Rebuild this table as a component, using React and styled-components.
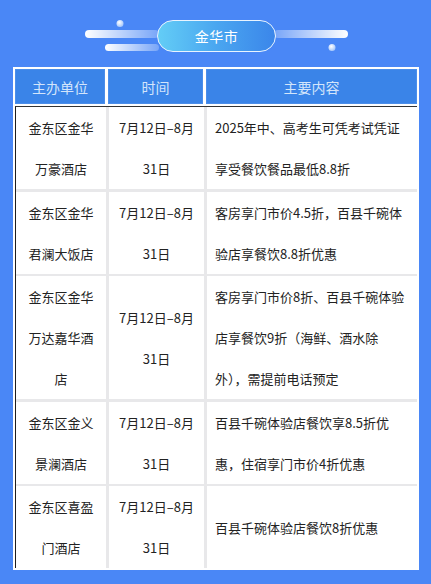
import React from "react";
import styled, { createGlobalStyle } from "styled-components";

const Global = createGlobalStyle`
  html, body {
    margin: 0;
    padding: 0;
    background: #4a87f6;
  }
  body {
    font-family: "Noto Sans CJK SC", "Noto Sans", sans-serif;
  }
`;

const Page = styled.div`
  width: 431px;
  min-height: 584px;
  background: #4a87f6;
  padding-top: 19px;
  box-sizing: border-box;
`;

////////////////////////////////////////////////////////////////////////
const TitleRow = styled.div`
  display: flex;
  justify-content: center;
  align-items: flex-start;
  height: 34px;
  padding-left: 2px;
`;

const Pill = styled.div`
  position: relative;
  z-index: 1;
  width: 119px;
  height: 32px;
  margin: 1px -2px 0;
  box-sizing: border-box;
  border: 1px solid #e9f4ff;
  border-radius: 16px;
  background: linear-gradient(90deg, #63cdf6 0%, #4aa6f0 50%, #3b86ea 100%);
  color: #fff;
  font-size: 14px;
  display: flex;
  align-items: center;
  justify-content: center;
  letter-spacing: 0.5px;
`;

const Deco = styled.svg`
  display: block;
  flex: none;
`;

////////////////////////////////////////////////////////////////////////
const Table = styled.div`
  margin: 14px 12px 0 13px;
  background: #fff;
  padding: 2px;
  color: #222;
`;

const Columns = styled.div`
  display: grid;
  grid-template-columns: 90px 95px 1fr;
  column-gap: ${(p) => p.$gap}px;
`;

const HeadCell = styled.div`
  height: 35px;
  background: #3a84e8;
  color: #d3e5fb;
  font-size: 14px;
  display: flex;
  align-items: center;
  justify-content: center;
  box-sizing: border-box;
  border: 1px solid #4b8eea;
`;

const Body = styled.div`
  margin-top: 2px;
  border-left: 1.5px solid #1d1d1d;
  border-top: 1px solid #333;
  background: #e8e8ea;
  display: grid;
  row-gap: 2.5px;
`;

const Cell = styled.div`
  background: #fff;
  font-size: 13px;
  line-height: 41px;
  display: flex;
  align-items: center;
  justify-content: ${(p) => (p.$left ? "flex-start" : "center")};
  text-align: ${(p) => (p.$left ? "left" : "center")};
  padding: 0 ${(p) => (p.$left ? "8px" : "7px")};
  box-sizing: border-box;
`;

const rows = [
  {
    org: "金东区金华万豪酒店",
    time: "7月12日–8月31日",
    text: "2025年中、高考生可凭考试凭证享受餐饮餐品最低8.8折",
  },
  {
    org: "金东区金华君澜大饭店",
    time: "7月12日–8月31日",
    text: "客房享门市价4.5折，百县千碗体验店享餐饮8.8折优惠",
  },
  {
    org: "金东区金华万达嘉华酒店",
    time: "7月12日–8月31日",
    text: "客房享门市价8折、百县千碗体验店享餐饮9折（海鲜、酒水除外），需提前电话预定",
  },
  {
    org: "金东区金义景澜酒店",
    time: "7月12日–8月31日",
    text: "百县千碗体验店餐饮享8.5折优惠，住宿享门市价4折优惠",
  },
  {
    org: "金东区喜盈门酒店",
    time: "7月12日–8月31日",
    text: "百县千碗体验店餐饮8折优惠",
  },
];

function LeftDeco() {
  return (
    <Deco width="74" height="34" viewBox="0 0 74 34">
      <defs>
        <linearGradient id="barL" x1="0" x2="1" y1="0" y2="0">
          <stop offset="0" stopColor="#ffffff" />
          <stop offset="1" stopColor="#ffffff" stopOpacity="0.25" />
        </linearGradient>
        <radialGradient id="dotL" cx="0.4" cy="0.35" r="0.7">
          <stop offset="0" stopColor="#ffffff" />
          <stop offset="1" stopColor="#9fc3fb" />
        </radialGradient>
      </defs>
      <rect x="0" y="11" width="74" height="8" rx="4" fill="url(#barL)" />
      <rect x="20" y="25" width="54" height="7" rx="3.5" fill="url(#barL)" />
      <circle cx="35" cy="4.5" r="3.5" fill="url(#dotL)" />
    </Deco>
  );
}

function RightDeco() {
  return (
    <Deco width="74" height="34" viewBox="0 0 74 34">
      <defs>
        <linearGradient id="barR" x1="0" x2="1" y1="0" y2="0">
          <stop offset="0" stopColor="#ffffff" stopOpacity="0.25" />
          <stop offset="1" stopColor="#ffffff" />
        </linearGradient>
        <radialGradient id="dotR" cx="0.4" cy="0.35" r="0.7">
          <stop offset="0" stopColor="#ffffff" />
          <stop offset="1" stopColor="#9fc3fb" />
        </radialGradient>
      </defs>
      <rect x="0" y="11" width="74" height="8" rx="4" fill="url(#barR)" />
      <circle cx="58" cy="28.5" r="3.5" fill="url(#dotR)" />
    </Deco>
  );
}

function App() {
  return (
    <Page>
      <Global />
      <TitleRow>
        <LeftDeco />
        <Pill>金华市</Pill>
        <RightDeco />
      </TitleRow>
      <Table>
        <Columns $gap={3}>
          <HeadCell>主办单位</HeadCell>
          <HeadCell>时间</HeadCell>
          <HeadCell>主要内容</HeadCell>
        </Columns>
        <Body>
          {rows.map((r) => (
            <Columns $gap={3} key={r.org}>
              <Cell>{r.org}</Cell>
              <Cell>{r.time}</Cell>
              <Cell $left>{r.text}</Cell>
            </Columns>
          ))}
        </Body>
      </Table>
    </Page>
  );
}

export default App;
